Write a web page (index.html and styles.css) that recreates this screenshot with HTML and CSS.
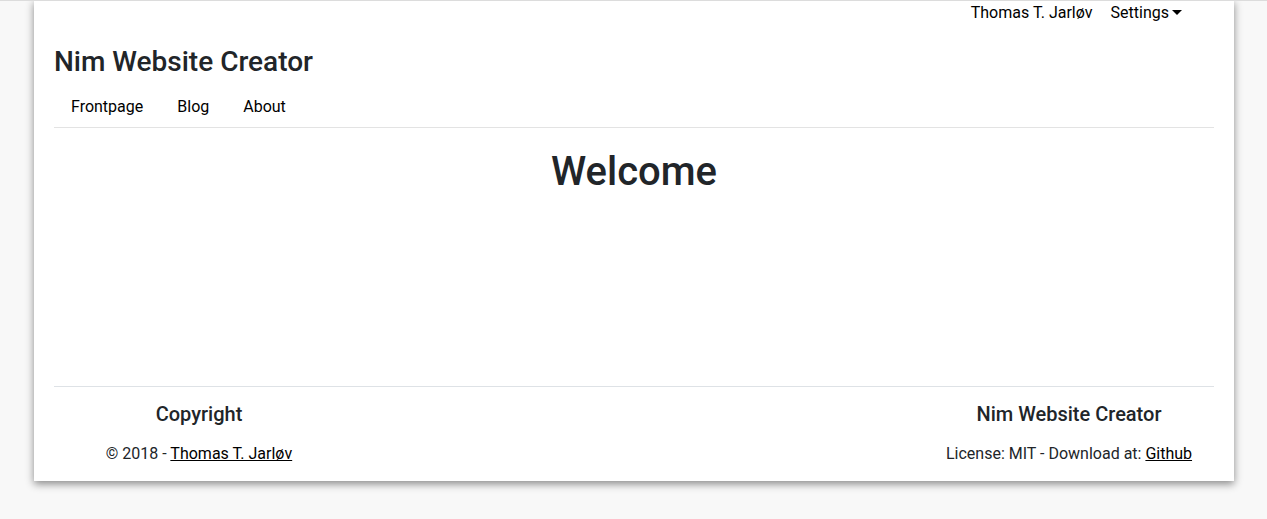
FILE: index.html
```html
<!DOCTYPE html>
<html>
<head>
<meta charset="utf-8">
<title>Nim Website Creator</title>
<link rel="stylesheet" href="styles.css">
</head>
<body>
<div class="page">
  <div class="topbar">
    <a class="top-link" href="#">Thomas T. Jarløv</a>
    <a class="top-link dropdown" href="#">Settings<span class="caret"></span></a>
  </div>
  <header class="header">
    <h3 class="brand">Nim Website Creator</h3>
    <nav class="nav">
      <a class="nav-link" href="#">Frontpage</a>
      <a class="nav-link" href="#">Blog</a>
      <a class="nav-link" href="#">About</a>
    </nav>
  </header>
  <main class="main">
    <h1 class="welcome">Welcome</h1>
  </main>
  <footer class="footer">
    <div class="fcol">
      <h5 class="ftitle">Copyright</h5>
      <p class="ftext">© 2018 - <a class="flink" href="#">Thomas T. Jarløv</a></p>
    </div>
    <div></div>
    <div></div>
    <div class="fcol">
      <h5 class="ftitle">Nim Website Creator</h5>
      <p class="ftext">License: MIT - Download at: <a class="flink" href="#">Github</a></p>
    </div>
  </footer>
</div>
</body>
</html>
```
FILE: styles.css
```css
html, body {
  margin: 0;
  padding: 0;
}
body {
  background: #f8f8f8;
  border-top: 1px solid #dcdcdc;
  font-family: Roboto, "Liberation Sans", sans-serif;
  font-size: 16px;
  line-height: 1.5;
  color: #212529;
  padding-bottom: 38px;
}
.page {
  width: 1200px;
  margin: -1px 0 0 34px;
  background: #fff;
  box-shadow: 0 3px 8px rgba(0, 0, 0, 0.45);
  padding: 0 20px 15px;
  box-sizing: border-box;
}
.topbar {
  display: flex;
  justify-content: flex-end;
  padding-right: 32px;
  padding-top: 1px;
  height: 24px;
}
.top-link {
  color: #000;
  text-decoration: none;
  line-height: 24px;
  margin-left: 18px;
}
.caret {
  display: inline-block;
  width: 0;
  height: 0;
  margin-left: 3px;
  vertical-align: 3px;
  border-left: 5px solid transparent;
  border-right: 5px solid transparent;
  border-top: 5px solid #000;
}
.header {
  border-bottom: 1px solid #e3e3e3;
}
.brand {
  margin: 20px 0 8px;
  font-size: 28px;
  font-weight: 500;
  line-height: 1.2;
}
.nav {
  display: flex;
}
.nav-link {
  color: #000;
  text-decoration: none;
  padding: 8px 17px 8px 17px;
}
.main {
  height: 258px;
  padding-top: 20px;
  box-sizing: border-box;
}
.welcome {
  margin: 0;
  text-align: center;
  font-size: 40px;
  font-weight: 500;
  line-height: 1.2;
}
.footer {
  border-top: 1px solid #dee2e6;
  display: grid;
  grid-template-columns: repeat(4, 1fr);
  padding-top: 15px;
}
.fcol {
  text-align: center;
}
.ftitle {
  margin: 0 0 16px;
  font-size: 20px;
  font-weight: 500;
  line-height: 1.2;
}
.ftext {
  margin: 0;
}
.flink {
  color: #000;
  text-decoration: underline;
}
```
